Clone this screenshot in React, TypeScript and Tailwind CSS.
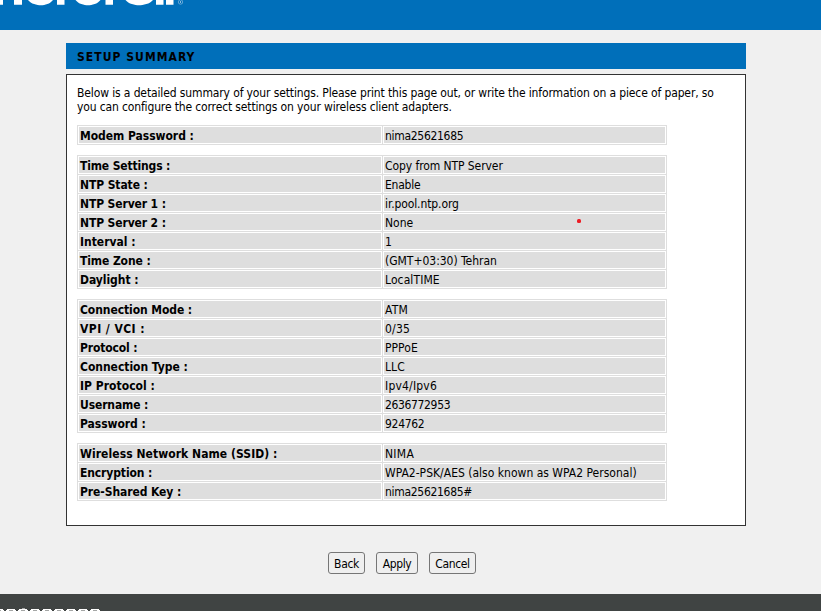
interface Row {
  label: string;
  value: string;
  labelTracking: string;
  valueTracking: string;
  marked?: boolean;
}

const sections: Row[][] = [
  [{ label: 'Modem Password :', value: 'nima25621685', labelTracking: 'tracking-[-0.04px]', valueTracking: 'tracking-[-0.3px]' }],
  [
    { label: 'Time Settings :', value: 'Copy from NTP Server', labelTracking: 'tracking-[-0.15px]', valueTracking: 'tracking-[-0.08px]' },
    { label: 'NTP State :', value: 'Enable', labelTracking: 'tracking-[-0.1px]', valueTracking: 'tracking-[-0.25px]' },
    { label: 'NTP Server 1 :', value: 'ir.pool.ntp.org', labelTracking: 'tracking-[-0.12px]', valueTracking: 'tracking-[-0.1px]' },
    { label: 'NTP Server 2 :', value: 'None', labelTracking: 'tracking-[-0.12px]', valueTracking: 'tracking-[0px]', marked: true },
    { label: 'Interval :', value: '1', labelTracking: 'tracking-[0px]', valueTracking: 'tracking-[0px]' },
    { label: 'Time Zone :', value: '(GMT+03:30) Tehran', labelTracking: 'tracking-[-0.1px]', valueTracking: 'tracking-[-0.02px]' },
    { label: 'Daylight :', value: 'LocalTIME', labelTracking: 'tracking-[-0.05px]', valueTracking: 'tracking-[0.1px]' },
  ],
  [
    { label: 'Connection Mode :', value: 'ATM', labelTracking: 'tracking-[-0.08px]', valueTracking: 'tracking-[0.2px]' },
    { label: 'VPI / VCI :', value: '0/35', labelTracking: 'tracking-[0.45px]', valueTracking: 'tracking-[0.2px]' },
    { label: 'Protocol :', value: 'PPPoE', labelTracking: 'tracking-[-0.15px]', valueTracking: 'tracking-[0.05px]' },
    { label: 'Connection Type :', value: 'LLC', labelTracking: 'tracking-[-0.03px]', valueTracking: 'tracking-[0.1px]' },
    { label: 'IP Protocol :', value: 'Ipv4/Ipv6', labelTracking: 'tracking-[0.03px]', valueTracking: 'tracking-[0.2px]' },
    { label: 'Username :', value: '2636772953', labelTracking: 'tracking-[-0.12px]', valueTracking: 'tracking-[-0.35px]' },
    { label: 'Password :', value: '924762', labelTracking: 'tracking-[-0.05px]', valueTracking: 'tracking-[-0.3px]' },
  ],
  [
    { label: 'Wireless Network Name (SSID) :', value: 'NIMA', labelTracking: 'tracking-[0.06px]', valueTracking: 'tracking-[0.3px]' },
    { label: 'Encryption :', value: 'WPA2-PSK/AES (also known as WPA2 Personal)', labelTracking: 'tracking-[-0.12px]', valueTracking: 'tracking-[0.01px]' },
    { label: 'Pre-Shared Key :', value: 'nima25621685#', labelTracking: 'tracking-[-0.08px]', valueTracking: 'tracking-[-0.3px]' },
  ],
];

const buttonClass =
  'h-[22px] rounded-[3px] border border-[#767676] bg-[#efefef] pt-[2px] text-center leading-[18px] whitespace-nowrap tracking-[-0.35px]';

function Logo() {
  return (
    <svg width="190" height="10" className="block" fill="#fff">
      <path d="M0 0h3v4.7H0zM14 0h8v4.7h-8zM57 0h7.500v4.700H57zM105.500 0h7.500v4.700h-7.500zM156 0h7.500v4.700H156zM166 0h7.500v4.700H166z" />
      <path d="M28 0H53C50 4 45 5.200 41 5.200S31 4 28 0zM75.500 0H100.500C97.500 4 92 5.200 88 5.200S78.500 4 75.500 0zM125.500 0H153C150 4 143 5.200 139 5.200S128.500 4 125.500 0z" />
      <circle cx="180.500" cy="2" r="2.200" fill="none" stroke="#8bbce0" strokeWidth="0.7" />
      <path d="M180 1h1v2h-1z" fill="#8bbce0" />
    </svg>
  );
}

const markOffsets = [-6, 6, 18, 30, 42, 54, 66, 78, 90];

// Upper edge of the footer wordmark, clipped by the viewport.
function FooterMark() {
  return (
    <svg width="110" height="17" className="block">
      {markOffsets.map((x) => (
        <g key={x}>
          <path d={`M${x} 17v-1h1v-1h8v1h1v1z`} fill="#fff" />
          <path d={`M${x + 3} 16h4v1h-4z`} fill="#a5a7a6" />
        </g>
      ))}
      <path d="M22 14h3v1h-3z" fill="#a5a7a6" />
    </svg>
  );
}

function Summary({ rows }: { rows: Row[] }) {
  return (
    <div className="flex w-[590px] flex-col gap-px border border-[#dedede] bg-[#dedede]">
      {rows.map((row) => (
        <div key={row.label} className="grid h-[18px] grid-cols-[304px_283px] gap-px whitespace-nowrap leading-[18px]">
          <div className={`h-[18px] border border-white bg-[#dedede] pl-px font-bold ${row.labelTracking}`}>{row.label}</div>
          <div className={`relative h-[18px] border border-white bg-[#dedede] pl-px ${row.valueTracking}`}>
            {row.value}
            {row.marked && <span className="absolute left-[193px] top-[5px] size-[4px] rounded-[1.5px] bg-[#ed1c24]" />}
          </div>
        </div>
      ))}
    </div>
  );
}

export default function App() {
  return (
    <div className="flex h-[611px] w-[821px] flex-col overflow-hidden bg-[#f0f0f0] font-['DejaVu_Sans_Condensed','DejaVu_Sans',sans-serif] text-[12px] leading-[14px] text-black [font-stretch:condensed]">
      <header className="h-[30px] shrink-0 bg-[#006fba]">
        <Logo />
      </header>
      <main className="ml-[66px] mt-[13px] flex h-[551px] w-[680px] flex-col">
        <h1 className="h-[26px] bg-[#006fba] pl-[11px] font-bold leading-[28px] tracking-[1.05px]">SETUP SUMMARY</h1>
        <section className="mt-[5px] h-[452px] border border-[#333] bg-white pl-[10px] pt-[11px]">
          <p className="whitespace-nowrap tracking-[-0.125px]">
            Below is a detailed summary of your settings. Please print this page out, or write the information on a piece of paper, so
            <br />
            <span className="tracking-[-0.14px]">you can configure the correct settings on your wireless client adapters.</span>
          </p>
          <div className="mt-[11px] flex flex-col gap-[10px]">
            {sections.map((rows) => (
              <Summary key={rows[0].label} rows={rows} />
            ))}
          </div>
        </section>
        <div className="mt-[26px] flex gap-[11px] pl-[262px]">
          <button className={`${buttonClass} w-[37px]`}>Back</button>
          <button className={`${buttonClass} w-[42px]`}>Apply</button>
          <button className={`${buttonClass} w-[47px]`}>Cancel</button>
        </div>
      </main>
      <footer className="h-[17px] shrink-0 bg-[#404443]">
        <FooterMark />
      </footer>
    </div>
  );
}
